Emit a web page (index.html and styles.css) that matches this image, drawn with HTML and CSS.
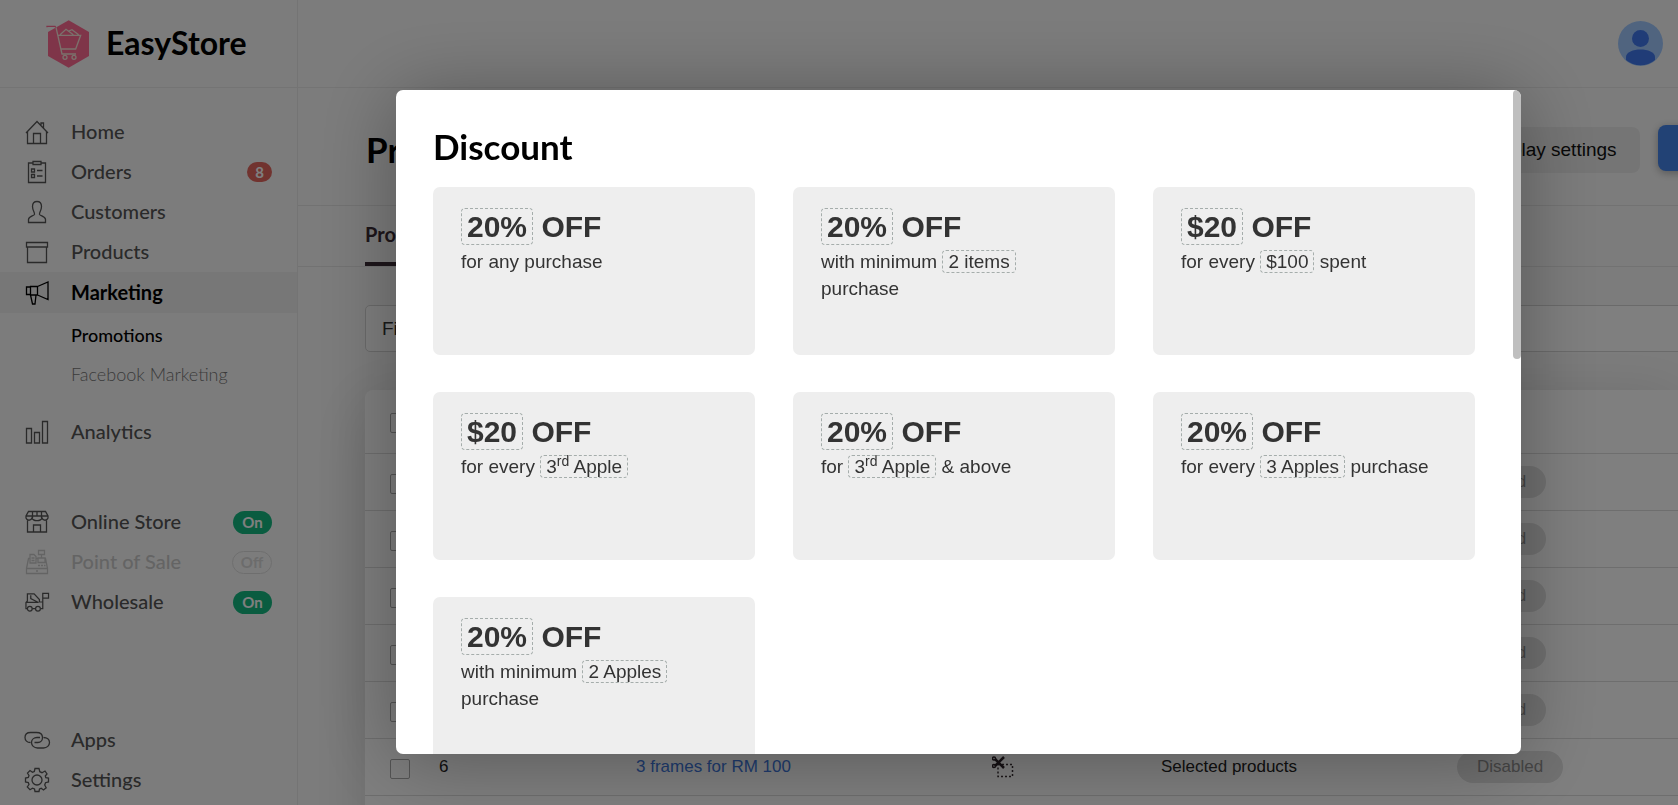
FILE: index.html
```
<!DOCTYPE html>
<html lang="en">
<head>
  <meta charset="UTF-8">
  <meta name="viewport" content="width=device-width, initial-scale=1.0">
  <title>EasyStore - Promotions</title>
  <link rel="stylesheet" href="styles.css">
</head>
<body>
  <div class="app">
    <header class="topbar">
      <a href="#" class="brand">
        <svg class="brand-logo" viewBox="138 58 132 144">
          <path d="M206 59 L267 94 V166 L206 201 L144 166 V94Z" fill="#ff6a92"/>
          <path d="M141 80 V77 H165 L170 84" fill="none" stroke="#ff6a92" stroke-width="4"/>
          <path d="M168 80 L186 160 H228 M173 104 H242 L227 145 H183 M180 102 L198 86 L220 102 M204 92 L216 87 L236 102" fill="none" stroke="#f6e2d8" stroke-width="4"/>
          <g fill="none" stroke="#f6e2d8" stroke-width="4"><circle cx="195" cy="170" r="6"/><circle cx="222" cy="170" r="6"/></g>
        </svg>
        <span class="brand-name">EasyStore</span>
      </a>
      <button type="button" class="avatar" aria-label="Account">
        <svg viewBox="0 0 45 45">
          <circle cx="22.5" cy="22.5" r="22.5" fill="#a0c9ff"/>
          <circle cx="22.5" cy="17.5" r="8.5" fill="#4078ee"/>
          <path d="M8 36 C8 26 37 26 37 36 V39 A22.5 22.5 0 0 1 8 39Z" fill="#4078ee"/>
        </svg>
      </button>
    </header>

    <nav class="sidebar">
      <a href="#" class="nav-item">
        <svg class="icon" viewBox="0 0 24 24"><path d="M1 13 L12 1.500 L23 13 M2.500 11.500 V23.500 H21.500 V11.500 M8.500 23.500 V13.500 H15.500 V23.500 M16 5 V3 H18.500 V8"/></svg>
        <span class="label">Home</span>
      </a>
      <a href="#" class="nav-item">
        <svg class="icon" viewBox="0 0 24 24"><path d="M8 3 H3.500 V22.500 H20.500 V3 H16 M8 1.500 H16 V4.500 H8Z M6.500 9 H9.500 V12 H6.500Z M6.500 14.500 H9.500 V17.500 H6.500Z M12 10.500 H17.500 M12 16 H17.500"/></svg>
        <span class="label">Orders</span>
        <span class="badge badge-count">8</span>
      </a>
      <a href="#" class="nav-item">
        <svg class="icon" viewBox="0 0 24 24"><path d="M9.500 14.500 C10 12.500 7.500 10.500 7.500 6.500 C7.500 3 9 1.500 12 1.500 C15 1.500 16.500 3 16.500 6.500 C16.500 10.500 14 12.500 14.500 14.500 C15.500 16 20.500 16.500 20.500 19.500 V22.500 H3.500 V19.500 C3.500 16.500 8.500 16 9.500 14.500Z"/></svg>
        <span class="label">Customers</span>
      </a>
      <a href="#" class="nav-item">
        <svg class="icon" viewBox="0 0 24 24"><path d="M1.500 2.500 H22.500 V7 H1.500Z M2.500 7 V22.500 H21.500 V7"/></svg>
        <span class="label">Products</span>
      </a>
      <a href="#" class="nav-item active">
        <svg class="icon" viewBox="0 0 24 24"><path d="M1.500 6 H5.500 V13.500 H1.500Z M5.500 5.500 H12.500 V14 H5.500Z M12.500 5.500 L23 1 V18.500 L12.500 14 M5.500 14 L7.500 23 H10 L11 14"/></svg>
        <span class="label">Marketing</span>
      </a>
      <div class="subnav">
        <a href="#" class="current">Promotions</a>
        <a href="#">Facebook Marketing</a>
      </div>
      <a href="#" class="nav-item">
        <svg class="icon" viewBox="0 0 24 24"><path d="M1.500 8.500 H6.500 V23 H1.500Z M9.500 12.500 H14.500 V23 H9.500Z M17.500 1.500 H22.500 V23 H17.500Z"/></svg>
        <span class="label">Analytics</span>
      </a>

      <div class="nav-group">
        <a href="#" class="nav-item">
          <svg class="icon" viewBox="0 0 24 24"><path d="M3.500 1.500 H20.500 L23 6 V8 C22 11 18 11 17 8 C16 11.500 8 11.500 7 8 C6 11 2 11 1 8 V6Z M1 6 H23 M7.500 1.500 V8 M12 1.500 V6 M16.500 1.500 V8 M2.500 10.500 V22 H21.500 V10.500 M8.500 22 V15 H15.500 V22"/></svg>
          <span class="label">Online Store</span>
          <span class="badge badge-on">On</span>
        </a>
        <a href="#" class="nav-item muted">
          <svg class="icon" viewBox="0 0 24 24"><path d="M1.500 18.500 H22.500 V23.500 H1.500Z M1.500 18.500 L3.500 8.500 H5 M11 8.500 H13 M20 8.500 H20.500 L22.500 18.500 M13.500 .500 H19.500 V4.500 H13.500Z M16.500 4.500 V8 M13 8 H20 V12.500 H13Z M5 4.500 H9 L11 6.500 V13 H5Z M6.500 8 H9.500 M6.500 10.500 H9.500 M13 15.500 H15 M16 15.500 H18 M19 15.500 H20.500 M11 21 H13"/></svg>
          <span class="label">Point of Sale</span>
          <span class="badge badge-off">Off</span>
        </a>
        <a href="#" class="nav-item">
          <svg class="icon" viewBox="0 0 25 24"><path d="M2.500 19 H1 V12.500 L2.500 11 V3.500 H9.500 L15 9.500 V12 H18.500 V19 H16.500 M1 12.500 H14 L6 8.500 V5 M7.500 19 H11 M18.500 12 V3 H24.500 V8 H18.500"/><circle cx="5" cy="19" r="2.500"/><circle cx="13.500" cy="19" r="2.500"/></svg>
          <span class="label">Wholesale</span>
          <span class="badge badge-on">On</span>
        </a>
      </div>

      <div class="nav-bottom">
        <a href="#" class="nav-item">
          <svg class="icon" viewBox="0 0 24 24"><path d="M5.500 14.500 C2 14.500 0 12.500 0 9.500 C0 6.500 2 4.500 5.500 4.500 H11.500 C15.500 4.500 17.500 6.500 17.500 9.500 C17.500 12.500 15.500 14.500 13 14.500 H9.500 M18.500 9.500 C22 9.500 24.500 11.500 24.500 14.500 C24.500 17.500 22 20 18.500 20 H12.500 C9 20 6.500 17.500 6.500 14.500 C6.500 11.500 9 9.500 12 9.500 H15"/></svg>
          <span class="label">Apps</span>
        </a>
        <a href="#" class="nav-item">
          <svg class="icon" viewBox="0 0 24 24"><circle cx="12" cy="12" r="5"/><path d="M10 .500 H14 L14.800 3.700 L17 4.700 L20 3 L22 6 L20.300 8 L20.800 9.700 L23.500 10 V14 L20.500 14.700 L19.700 17 L21.200 19.800 L18.500 22 L16.200 20.300 L14.500 21 L14 23.500 H10 L9.500 21 L7.500 20.200 L5 21.700 L2.300 19 L4 16.500 L3.300 14.500 L.500 14 V10 L3.300 9.500 L4 7.500 L2.500 5 L5 2.500 L7.500 4.200 L9.300 3.500Z"/></svg>
          <span class="label">Settings</span>
        </a>
      </div>
    </nav>

    <main class="main">
      <div class="page-header">
        <h1>Promotions</h1>
        <div class="actions">
          <button type="button" class="btn">Display settings</button>
          <button type="button" class="btn btn-primary" aria-label="Add promotion"></button>
        </div>
      </div>
      <div class="tabs">
        <a href="#" class="tab">Promotions</a>
      </div>
      <div class="filter">
        <button type="button" class="filter-btn">Filter</button>
        <input type="text" class="filter-input" aria-label="Search promotions">
      </div>
      <table class="promo-table">
        <thead>
          <tr><th class="col-check"><input type="checkbox" aria-label="Select all"></th><th class="col-no"></th><th class="col-name"></th><th class="col-type"></th><th class="col-target"></th><th></th></tr>
        </thead>
        <tbody>
          <tr><td><input type="checkbox" aria-label="Select 1"></td><td>1</td><td></td><td></td><td></td><td><span class="status">Ended</span></td></tr>
          <tr><td><input type="checkbox" aria-label="Select 2"></td><td>2</td><td></td><td></td><td></td><td><span class="status">Ended</span></td></tr>
          <tr><td><input type="checkbox" aria-label="Select 3"></td><td>3</td><td></td><td></td><td></td><td><span class="status">Ended</span></td></tr>
          <tr><td><input type="checkbox" aria-label="Select 4"></td><td>4</td><td></td><td></td><td></td><td><span class="status">Ended</span></td></tr>
          <tr><td><input type="checkbox" aria-label="Select 5"></td><td>5</td><td></td><td></td><td></td><td><span class="status">Ended</span></td></tr>
          <tr>
            <td><input type="checkbox" aria-label="Select 6"></td>
            <td>6</td>
            <td><a href="#">3 frames for RM 100</a></td>
            <td>
              <svg class="type-icon" viewBox="0 0 22 22"><path d="M6 8.500 H20.500 V20.500 H6Z" fill="none" stroke="#3a3035" stroke-width="1.500" stroke-dasharray="2 2"/><path d="M3 3 L12 12 M12 1 L3 10" stroke="#2c2228" stroke-width="2.500"/><g fill="none" stroke="#2c2228" stroke-width="1.500"><circle cx="2" cy="2.500" r="1.500"/><circle cx="2" cy="10" r="1.500"/></g></svg>
            </td>
            <td>Selected products</td>
            <td><span class="status">Disabled</span></td>
          </tr>
        </tbody>
      </table>
    </main>
  </div>

  <div class="overlay">
    <div class="modal" role="dialog" aria-labelledby="modal-title">
      <div class="modal-content">
        <h2 id="modal-title">Discount</h2>
        <div class="cards">
          <button type="button" class="card">
            <strong><span class="tag">20%</span> OFF</strong>
            <span class="desc">for any purchase</span>
          </button>
          <button type="button" class="card">
            <strong><span class="tag">20%</span> OFF</strong>
            <span class="desc">with minimum <span class="tag">2 items</span> purchase</span>
          </button>
          <button type="button" class="card">
            <strong><span class="tag">$20</span> OFF</strong>
            <span class="desc">for every <span class="tag">$100</span> spent</span>
          </button>
          <button type="button" class="card">
            <strong><span class="tag">$20</span> OFF</strong>
            <span class="desc">for every <span class="tag">3<sup>rd</sup> Apple</span></span>
          </button>
          <button type="button" class="card">
            <strong><span class="tag">20%</span> OFF</strong>
            <span class="desc">for <span class="tag">3<sup>rd</sup> Apple</span> &amp; above</span>
          </button>
          <button type="button" class="card">
            <strong><span class="tag">20%</span> OFF</strong>
            <span class="desc">for every <span class="tag">3 Apples</span> purchase</span>
          </button>
          <button type="button" class="card">
            <strong><span class="tag">20%</span> OFF</strong>
            <span class="desc">with minimum <span class="tag">2 Apples</span> purchase</span>
          </button>
        </div>
      </div>
      <div class="scroll-thumb"></div>
    </div>
  </div>
</body>
</html>
```
FILE: styles.css
```
* {
  box-sizing: border-box;
}
body {
  margin: 0;
  font-family: "Liberation Sans", Arial, sans-serif;
  font-size: 19px;
  color: #333;
  background: #f9f9f9;
  overflow: hidden;
}
a {
  text-decoration: none;
  color: inherit;
}
button {
  font: inherit;
  color: inherit;
  border: none;
  cursor: pointer;
}
.app {
  display: grid;
  grid-template-columns: 298px 1fr;
  grid-template-rows: 88px 1fr;
  height: 100vh;
}

/* top bar */
.topbar {
  grid-column: 1 / 3;
  display: flex;
  align-items: center;
  justify-content: space-between;
  padding-right: 15px;
  border-bottom: 1px solid #e8e8e8;
}
.brand {
  display: flex;
  align-items: center;
  align-self: stretch;
  gap: 16px;
  width: 298px;
  padding-left: 46px;
  border-right: 1px solid #e8e8e8;
}
.brand-logo {
  width: 44px;
  height: 48px;
}
.brand-name {
  padding-bottom: 2px;
  font-family: Lato, sans-serif;
  font-size: 32px;
  font-weight: 700;
  color: #000;
}
.avatar {
  width: 45px;
  height: 45px;
  padding: 0;
  background: none;
}
.avatar svg {
  display: block;
}

/* sidebar */
.sidebar {
  display: flex;
  flex-direction: column;
  padding: 24px 0 5px;
  border-right: 1px solid #e8e8e8;
  font-family: Lato, sans-serif;
}
.nav-item {
  display: flex;
  align-items: center;
  height: 40px;
  padding: 0 25px;
  font-size: 20px;
  font-weight: 500;
  color: #555;
}
.sidebar > .nav-item.active {
  height: 41px;
  background: #efefef;
  color: #000;
  font-weight: 700;
}
.nav-item.muted {
  color: #c9c9c9;
}
.label {
  padding-bottom: 2px;
}
.icon {
  width: 24px;
  height: 24px;
  margin-right: 22px;
  overflow: visible;
  fill: none;
  stroke: currentColor;
  stroke-width: 1.3;
}
.badge {
  margin-left: auto;
  border-radius: 12px;
  font-size: 15px;
  font-weight: 700;
  line-height: 23px;
  text-align: center;
  color: #fff;
}
.badge-count {
  width: 25px;
  line-height: 20px;
  background: #e2675f;
}
.badge-on {
  width: 39px;
  background: #15b881;
}
.badge-off {
  width: 40px;
  border: 1px solid #ddd;
  line-height: 21px;
  color: #d8d8d8;
}
.subnav {
  display: flex;
  flex-direction: column;
  padding: 2px 0 18px 71px;
  font-size: 18px;
  line-height: 39px;
  color: #777;
}
.subnav a {
  font-weight: 300;
}
.subnav .current {
  line-height: 40px;
  color: #000;
  font-weight: 500;
}
.nav-group {
  margin-top: 50px;
}
.nav-bottom {
  margin-top: auto;
}

/* main */
.main {
  overflow: hidden;
}
.page-header {
  display: flex;
  align-items: center;
  justify-content: space-between;
  height: 118px;
  padding: 5px 0 0 68px;
  border-bottom: 1px solid #e5e5e5;
}
h1, h2 {
  margin: 0;
  font-family: Lato, sans-serif;
  font-size: 35px;
  font-weight: 700;
  line-height: 40px;
  color: #000;
}
.actions {
  display: flex;
  align-items: flex-start;
  gap: 18px;
  margin-right: -160px;
}
.btn {
  width: 180px;
  height: 46px;
  margin-top: 2px;
  border-radius: 8px;
  background: #ebebeb;
  color: #111;
}
.btn-primary {
  margin-top: 0;
  background: #4484ea;
  color: #fff;
  box-shadow: 0 2px 8px rgba(0,0,0,0.3);
}
.tabs {
  display: flex;
  height: 61px;
  padding-left: 67px;
  border-bottom: 1px solid #e5e5e5;
}
.tab {
  height: 60px;
  border-bottom: 4px solid #3b2c36;
  font-family: Lato, sans-serif;
  font-size: 20px;
  font-weight: 700;
  line-height: 57px;
  color: #3b2c36;
}
.filter {
  display: flex;
  height: 47px;
  margin: 38px 0 38px 67px;
}
.filter-btn {
  padding: 0 16px;
  border: 1px solid #d5d5d5;
  border-radius: 5px 0 0 5px;
  background: #fff;
}
.filter-input {
  flex: 1;
  border: 1px solid #d5d5d5;
  border-width: 1px 0;
  background: #fff;
}
.promo-table {
  width: calc(100% - 67px);
  margin-left: 67px;
  padding-bottom: 57px;
  table-layout: fixed;
  border-collapse: separate;
  border-spacing: 0;
  border-radius: 8px 0 0 0;
  background: #fff;
  box-shadow: 0 10px 60px rgba(0,0,0,0.14);
  font-size: 17px;
  color: #222;
}
.promo-table th, .promo-table td {
  height: 57px;
  padding: 0;
  border-bottom: 1px solid #ddd;
  text-align: left;
}
.promo-table th {
  height: 64px;
}
.promo-table a {
  color: #4078dd;
}
.col-check {
  width: 74px;
}
.col-no {
  width: 197px;
}
.col-name {
  width: 356px;
}
.col-type {
  width: 169px;
}
.col-target {
  width: 296px;
}
.promo-table input {
  appearance: none;
  display: block;
  width: 20px;
  height: 20px;
  margin: 3px 0 0 25px;
  border: 1px solid #aaa;
  border-radius: 2px;
}
.type-icon {
  display: block;
  width: 22px;
  height: 22px;
}
.status {
  display: inline-block;
  padding: 0 20px;
  border-radius: 16px;
  background: #e2e2e2;
  line-height: 32px;
  color: #8c8c8c;
}

/* modal */
.overlay {
  position: fixed;
  inset: 0;
  display: flex;
  padding: 90px 157px 51px 396px;
  background: rgba(0,0,0,0.5);
}
.modal {
  position: relative;
  flex: 1;
  overflow: hidden;
  border-radius: 7px;
  background: #fff;
  box-shadow: 0 6px 80px rgba(0,0,0,0.32);
}
.modal-content {
  padding: 36px 46px 37px 37px;
}
.scroll-thumb {
  position: absolute;
  top: 0;
  right: 0;
  width: 8px;
  height: 269px;
  border-radius: 4px;
  background: #bfbfbf;
}
.cards {
  display: grid;
  grid-template-columns: repeat(3, 1fr);
  gap: 37px 38px;
  margin-top: 21px;
}
.card {
  display: flex;
  flex-direction: column;
  gap: 2px;
  height: 168px;
  padding: 21px 26px 22px 28px;
  border-radius: 7px;
  background: #eee;
  text-align: left;
}
.card strong {
  font-size: 30px;
  line-height: 38px;
}
.desc {
  line-height: 27px;
}
.tag {
  padding: 0 5px;
  border: 1px dashed #a5adab;
  border-radius: 4px;
}
strong .tag {
  padding: 1px 5px;
}
sup {
  font-size: 14px;
  line-height: 0;
}
```
